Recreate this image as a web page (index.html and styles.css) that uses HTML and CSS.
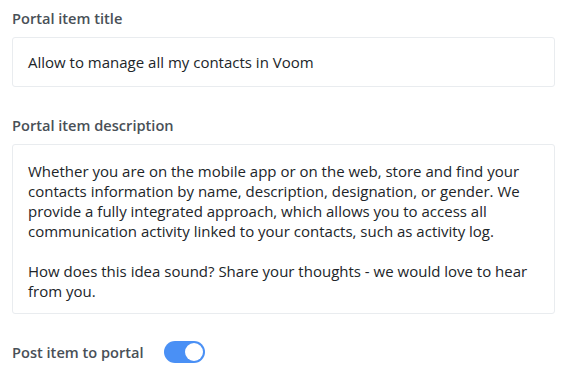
FILE: index.html
```html
<!DOCTYPE html>
<html>
<head>
<meta charset="utf-8">
<link rel="stylesheet" href="styles.css">
</head>
<body>
<div class="form">
  <div class="field">
    <div class="label">Portal item title</div>
    <div class="box input">Allow to manage all my contacts in Voom</div>
  </div>
  <div class="field last">
    <div class="label">Portal item description</div>
    <div class="box textarea">
      <p>Whether you are on the mobile app or on the web, store and find your contacts information by name, description, designation, or gender. We provide a fully integrated approach, which allows you to access all communication activity linked to your contacts, such as activity log.</p>
      <p>How does this idea sound? Share your thoughts - we would love to hear from you.</p>
    </div>
  </div>
  <div class="toggle-row">
    <span class="label inline">Post item to portal</span>
    <span class="switch"><span class="knob"></span></span>
  </div>
</div>
</body>
</html>
```
FILE: styles.css
```css
html, body { margin: 0; padding: 0; background: #fff; }
body { font-family: "Open Sans", "Noto Sans", sans-serif; color: #212529; }
.form { padding: 8px 14px 0 12px; display: flex; flex-direction: column; }
.field { display: flex; flex-direction: column; margin-bottom: 28px; }
.field.last { margin-bottom: 27px; }
.label { font-size: 14.6px; font-weight: 600; color: #495057; line-height: 20px; margin-bottom: 9px; }
.box { border: 1px solid #e9ecef; border-radius: 3px; font-size: 15px; line-height: 20px; color: #212529; }
.input { padding: 14px 15px; }
.textarea { padding: 16px 15px 16px 15px; height: 136px; }
.textarea p { margin: 0 0 20px 0; }
.textarea p:last-child { margin-bottom: 0; }
.toggle-row { display: flex; align-items: center; gap: 20px; }
.label.inline { margin-bottom: 0; }
.switch { width: 41px; height: 22px; background: #4a90f5; border-radius: 11px; position: relative; display: inline-block; }
.knob { position: absolute; right: 2px; top: 2px; width: 18px; height: 18px; border-radius: 50%; background: #fff; }
```
